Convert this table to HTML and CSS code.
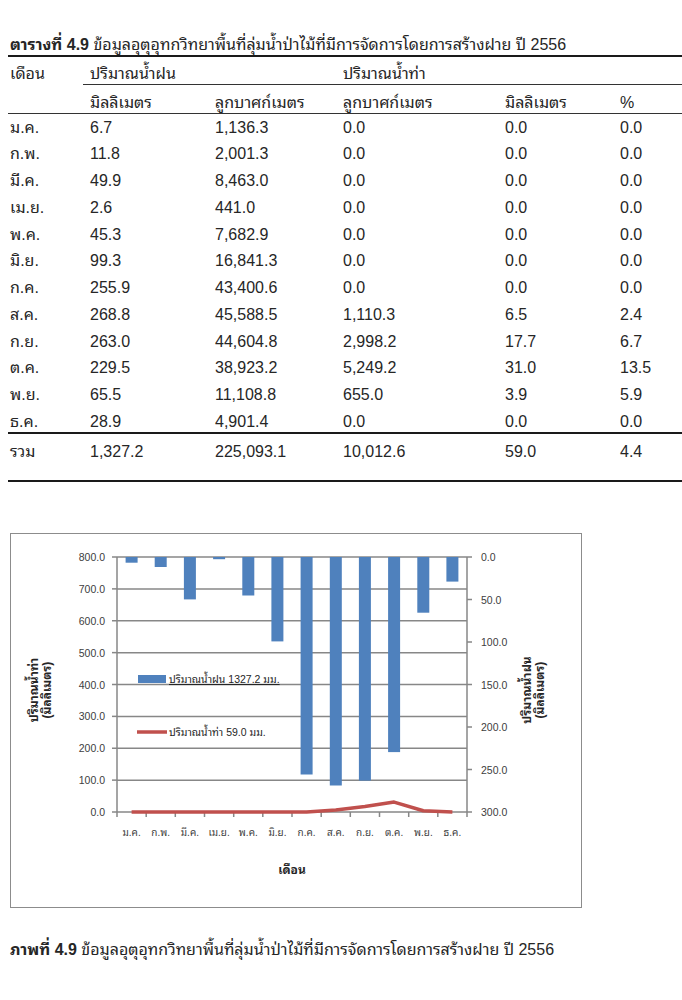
FILE: index.html
```html
<!DOCTYPE html>
<html lang="th">
<head>
<meta charset="utf-8">
<link rel="stylesheet" href="styles.css">
</head>
<body>
<div class="page">
  <p class="title"><b>ตารางที่ 4.9</b> ข้อมูลอุตุอุทกวิทยาพื้นที่ลุ่มน้ำป่าไม้ที่มีการจัดการโดยการสร้างฝาย ปี 2556</p>
  <table class="data">
    <colgroup>
      <col class="c1"><col class="c2"><col class="c3"><col class="c4"><col class="c5"><col class="c6">
    </colgroup>
    <thead>
      <tr class="h1"><th>เดือน</th><th colspan="2" class="ul">ปริมาณน้ำฝน</th><th colspan="3" class="ul">ปริมาณน้ำท่า</th></tr>
      <tr class="h2"><th></th><th>มิลลิเมตร</th><th>ลูกบาศก์เมตร</th><th>ลูกบาศก์เมตร</th><th>มิลลิเมตร</th><th>%</th></tr>
    </thead>
    <tbody>
      <tr><td>ม.ค.</td><td>6.7</td><td>1,136.3</td><td>0.0</td><td>0.0</td><td>0.0</td></tr>
      <tr><td>ก.พ.</td><td>11.8</td><td>2,001.3</td><td>0.0</td><td>0.0</td><td>0.0</td></tr>
      <tr><td>มี.ค.</td><td>49.9</td><td>8,463.0</td><td>0.0</td><td>0.0</td><td>0.0</td></tr>
      <tr><td>เม.ย.</td><td>2.6</td><td>441.0</td><td>0.0</td><td>0.0</td><td>0.0</td></tr>
      <tr><td>พ.ค.</td><td>45.3</td><td>7,682.9</td><td>0.0</td><td>0.0</td><td>0.0</td></tr>
      <tr><td>มิ.ย.</td><td>99.3</td><td>16,841.3</td><td>0.0</td><td>0.0</td><td>0.0</td></tr>
      <tr><td>ก.ค.</td><td>255.9</td><td>43,400.6</td><td>0.0</td><td>0.0</td><td>0.0</td></tr>
      <tr><td>ส.ค.</td><td>268.8</td><td>45,588.5</td><td>1,110.3</td><td>6.5</td><td>2.4</td></tr>
      <tr><td>ก.ย.</td><td>263.0</td><td>44,604.8</td><td>2,998.2</td><td>17.7</td><td>6.7</td></tr>
      <tr><td>ต.ค.</td><td>229.5</td><td>38,923.2</td><td>5,249.2</td><td>31.0</td><td>13.5</td></tr>
      <tr><td>พ.ย.</td><td>65.5</td><td>11,108.8</td><td>655.0</td><td>3.9</td><td>5.9</td></tr>
      <tr class="last"><td>ธ.ค.</td><td>28.9</td><td>4,901.4</td><td>0.0</td><td>0.0</td><td>0.0</td></tr>
    </tbody>
    <tfoot>
      <tr><td>รวม</td><td>1,327.2</td><td>225,093.1</td><td>10,012.6</td><td>59.0</td><td>4.4</td></tr>
    </tfoot>
  </table>

  <div class="chart">
    <svg width="572" height="375" viewBox="0 0 572 375" xmlns="http://www.w3.org/2000/svg">
      <g class="grid">
        <line x1="107" y1="24" x2="457" y2="24"/>
        <line x1="107" y1="55.875" x2="457" y2="55.875"/>
        <line x1="107" y1="87.75" x2="457" y2="87.75"/>
        <line x1="107" y1="119.625" x2="457" y2="119.625"/>
        <line x1="107" y1="151.5" x2="457" y2="151.5"/>
        <line x1="107" y1="183.375" x2="457" y2="183.375"/>
        <line x1="107" y1="215.25" x2="457" y2="215.25"/>
        <line x1="107" y1="247.125" x2="457" y2="247.125"/>
      </g>
      <g class="bars">
        <rect x="115.6" y="24" width="12" height="5.7"/>
        <rect x="144.7" y="24" width="12" height="10"/>
        <rect x="173.9" y="24" width="12" height="42.4"/>
        <rect x="203.1" y="24" width="12" height="2.2"/>
        <rect x="232.3" y="24" width="12" height="38.5"/>
        <rect x="261.4" y="24" width="12" height="84.4"/>
        <rect x="290.6" y="24" width="12" height="217.5"/>
        <rect x="319.8" y="24" width="12" height="228.5"/>
        <rect x="348.9" y="24" width="12" height="223.6"/>
        <rect x="378.1" y="24" width="12" height="195.1"/>
        <rect x="407.3" y="24" width="12" height="55.7"/>
        <rect x="436.4" y="24" width="12" height="24.6"/>
      </g>
      <g class="axes">
        <line x1="107" y1="24" x2="107" y2="279"/>
        <line x1="457" y1="24" x2="457" y2="279"/>
        <line x1="107" y1="279" x2="457" y2="279"/>
        <line x1="102" y1="24" x2="107" y2="24"/>
        <line x1="102" y1="55.875" x2="107" y2="55.875"/>
        <line x1="102" y1="87.75" x2="107" y2="87.75"/>
        <line x1="102" y1="119.625" x2="107" y2="119.625"/>
        <line x1="102" y1="151.5" x2="107" y2="151.5"/>
        <line x1="102" y1="183.375" x2="107" y2="183.375"/>
        <line x1="102" y1="215.25" x2="107" y2="215.25"/>
        <line x1="102" y1="247.125" x2="107" y2="247.125"/>
        <line x1="102" y1="279" x2="107" y2="279"/>
        <line x1="457" y1="24" x2="462" y2="24"/>
        <line x1="457" y1="66.5" x2="462" y2="66.5"/>
        <line x1="457" y1="109" x2="462" y2="109"/>
        <line x1="457" y1="151.5" x2="462" y2="151.5"/>
        <line x1="457" y1="194" x2="462" y2="194"/>
        <line x1="457" y1="236.5" x2="462" y2="236.5"/>
        <line x1="457" y1="279" x2="462" y2="279"/>
        <line x1="107" y1="279" x2="107" y2="284"/>
        <line x1="136.2" y1="279" x2="136.2" y2="284"/>
        <line x1="165.3" y1="279" x2="165.3" y2="284"/>
        <line x1="194.5" y1="279" x2="194.5" y2="284"/>
        <line x1="223.7" y1="279" x2="223.7" y2="284"/>
        <line x1="252.8" y1="279" x2="252.8" y2="284"/>
        <line x1="282" y1="279" x2="282" y2="284"/>
        <line x1="311.2" y1="279" x2="311.2" y2="284"/>
        <line x1="340.3" y1="279" x2="340.3" y2="284"/>
        <line x1="369.5" y1="279" x2="369.5" y2="284"/>
        <line x1="398.7" y1="279" x2="398.7" y2="284"/>
        <line x1="427.8" y1="279" x2="427.8" y2="284"/>
        <line x1="457" y1="279" x2="457" y2="284"/>
      </g>
      <polyline class="runoff" points="121.6,279 150.7,279 179.9,279 209.1,279 238.3,279 267.4,279 296.6,279 325.8,276.9 354.9,273.4 384.1,269.1 413.3,277.8 442.4,279"/>
      <g class="ylab-left">
        <text x="95" y="28">800.0</text>
        <text x="95" y="59.9">700.0</text>
        <text x="95" y="91.8">600.0</text>
        <text x="95" y="123.6">500.0</text>
        <text x="95" y="155.5">400.0</text>
        <text x="95" y="187.4">300.0</text>
        <text x="95" y="219.3">200.0</text>
        <text x="95" y="251.1">100.0</text>
        <text x="95" y="283">0.0</text>
      </g>
      <g class="ylab-right">
        <text x="471" y="28">0.0</text>
        <text x="471" y="70.5">50.0</text>
        <text x="471" y="113">100.0</text>
        <text x="471" y="155.5">150.0</text>
        <text x="471" y="198">200.0</text>
        <text x="471" y="240.5">250.0</text>
        <text x="471" y="283">300.0</text>
      </g>
      <g class="xlab">
        <text x="121.6" y="303">ม.ค.</text>
        <text x="150.7" y="303">ก.พ.</text>
        <text x="179.9" y="303">มี.ค.</text>
        <text x="209.1" y="303">เม.ย.</text>
        <text x="238.3" y="303">พ.ค.</text>
        <text x="267.4" y="303">มิ.ย.</text>
        <text x="296.6" y="303">ก.ค.</text>
        <text x="325.8" y="303">ส.ค.</text>
        <text x="354.9" y="303">ก.ย.</text>
        <text x="384.1" y="303">ต.ค.</text>
        <text x="413.3" y="303">พ.ย.</text>
        <text x="442.4" y="303">ธ.ค.</text>
      </g>
      <text class="axis-title" x="282" y="341">เดือน</text>
      <text class="axis-title" transform="translate(28 157) rotate(-90)"><tspan x="0" y="0">ปริมาณน้ำท่า</tspan><tspan x="0" y="13">(มิลลิเมตร)</tspan></text>
      <text class="axis-title" transform="translate(521 157) rotate(-90)"><tspan x="0" y="0">ปริมาณน้ำฝน</tspan><tspan x="0" y="13">(มิลลิเมตร)</tspan></text>
      <rect class="leg-bar" x="128" y="142" width="28" height="8"/>
      <text class="legend ul-text" x="159" y="150">ปริมาณน้ำฝน 1327.2 มม.</text>
      <line class="leg-line" x1="127" y1="199" x2="157" y2="199"/>
      <text class="legend" x="159" y="203">ปริมาณน้ำท่า 59.0 มม.</text>
    </svg>
  </div>

  <p class="caption"><b>ภาพที่ 4.9</b> ข้อมูลอุตุอุทกวิทยาพื้นที่ลุ่มน้ำป่าไม้ที่มีการจัดการโดยการสร้างฝาย ปี 2556</p>
</div>
</body>
</html>
```

FILE: styles.css
```css
html, body {
  margin: 0;
  padding: 0;
  background: #ffffff;
}

.page {
  width: 682px;
  padding: 0 0 0 8px;
  box-sizing: border-box;
  font-family: "Liberation Sans", "Noto Sans Thai Looped", "Garuda", "Loma", "Waree", "Tahoma", "Noto Sans Thai", "DejaVu Sans", sans-serif;
  color: #262626;
  font-size: 16px;
}

.title {
  margin: 0;
  padding: 35px 0 0 2px;
  height: 20px;
  line-height: 20px;
  font-size: 16px;
}

.title b, .caption b {
  font-weight: bold;
}

.data {
  width: 674px;
  border-collapse: collapse;
  table-layout: fixed;
  border-top: 2px solid #1a1a1a;
  border-bottom: 2px solid #1a1a1a;
}

.c1 { width: 75px; }
.c2 { width: 125px; }
.c3 { width: 128px; }
.c4 { width: 162px; }
.c5 { width: 115px; }
.c6 { width: auto; }

.data th, .data td {
  font-weight: normal;
  text-align: left;
  padding: 0 0 0 7px;
  white-space: nowrap;
  line-height: 20px;
  box-sizing: border-box;
}

.data th:first-child, .data td:first-child {
  padding-left: 2px;
}

.h1 th {
  height: 26px;
  padding-top: 7px;
  vertical-align: top;
}

.h1 th.ul {
  border-bottom: 1px solid #333;
}

.h2 th {
  height: 28px;
  padding-top: 8px;
  vertical-align: top;
  border-bottom: 1px solid #333;
}

.data tbody td {
  height: 26.75px;
  padding-top: 4px;
  vertical-align: top;
}

.data tbody tr.last td {
  height: 25.5px;
  border-bottom: 2px solid #1a1a1a;
}

.data tfoot td {
  height: 48px;
  vertical-align: top;
  padding-top: 8px;
}

.chart {
  margin: 51px 0 0 2px;
  width: 572px;
  height: 375px;
  border: 1.5px solid #8c8c8c;
  box-sizing: border-box;
}

.chart svg {
  display: block;
  margin: -1.5px 0 0 -1.5px;
  font-family: "Liberation Sans", "Noto Sans Thai Looped", "Garuda", "Loma", "Tahoma", "Noto Sans Thai", "DejaVu Sans", sans-serif;
}

.grid line {
  stroke: #878787;
  stroke-width: 1.5;
}

.axes line {
  stroke: #878787;
  stroke-width: 1.5;
}

.bars rect {
  fill: #4f81bd;
}

.runoff {
  fill: none;
  stroke: #c0504d;
  stroke-width: 3.5;
  stroke-linejoin: round;
}

.ylab-left text {
  font-size: 10.5px;
  fill: #404040;
  text-anchor: end;
}

.ylab-right text {
  font-size: 10.5px;
  fill: #404040;
}

.xlab text {
  font-size: 10px;
  fill: #404040;
  text-anchor: middle;
}

.axis-title {
  font-size: 12px;
  font-weight: bold;
  fill: #262626;
  text-anchor: middle;
}

.leg-bar {
  fill: #4f81bd;
}

.leg-line {
  stroke: #c0504d;
  stroke-width: 3.5;
}

.legend {
  font-size: 10.5px;
  fill: #262626;
}

.ul-text {
  text-decoration: underline;
}

.caption {
  margin: 32px 0 0 2px;
  height: 20px;
  line-height: 20px;
  font-size: 16px;
}
```
